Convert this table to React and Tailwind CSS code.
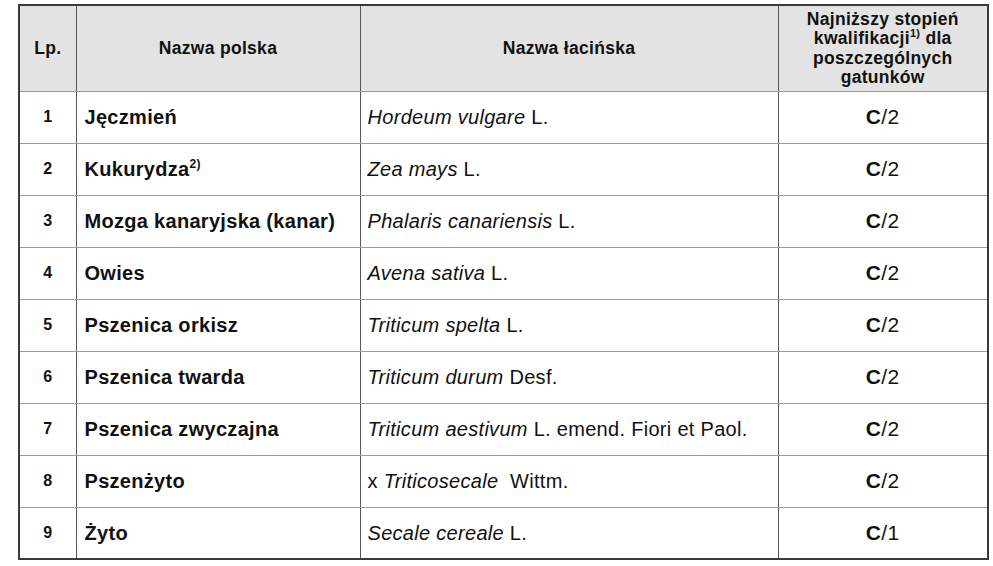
import React from "react";

const rows = [
  { lp: 1, pl: "Jęczmień", latin: "Hordeum vulgare", author: " L.", grade: "2" },
  { lp: 2, pl: "Kukurydza", sup: "2)", latin: "Zea mays", author: " L.", grade: "2" },
  { lp: 3, pl: "Mozga kanaryjska (kanar)", latin: "Phalaris canariensis", author: " L.", grade: "2" },
  { lp: 4, pl: "Owies", latin: "Avena sativa", author: " L.", grade: "2" },
  { lp: 5, pl: "Pszenica orkisz", latin: "Triticum spelta", author: " L.", grade: "2" },
  { lp: 6, pl: "Pszenica twarda", latin: "Triticum durum", author: " Desf.", grade: "2" },
  { lp: 7, pl: "Pszenica zwyczajna", latin: "Triticum aestivum", author: " L. emend. Fiori et Paol.", grade: "2" },
  { lp: 8, pl: "Pszenżyto", prefix: "x ", latin: "Triticosecale", author: "\u00a0 Wittm.", grade: "2" },
  { lp: 9, pl: "Żyto", latin: "Secale cereale", author: " L.", grade: "1" },
];

const cell = "border-y border-x border-y-[#9a9a9a] border-x-[#555555]";

export default function App() {
  return (
    <div className="bg-white w-[993px] h-[566px] pt-[4px] pl-[18px] font-['Liberation_Sans',Arial,sans-serif] text-[#111]">
      <table className="table-fixed border-collapse border-2 border-[#3a3a3a] w-[969px]">
        <colgroup>
          <col className="w-[57px]" />
          <col className="w-[284px]" />
          <col className="w-[418px]" />
          <col className="w-[210px]" />
        </colgroup>
        <thead>
          <tr className="h-[86px] bg-[#e3e3e3] font-bold text-[17.5px] tracking-[0.3px]">
            <th className={`${cell} text-center`}>Lp.</th>
            <th className={`${cell} text-center`}>Nazwa polska</th>
            <th className={`${cell} text-center`}>Nazwa łacińska</th>
            <th className={`${cell} text-center leading-[19.5px] pt-[1px]`}>
              Najniższy stopień
              <br />
              kwalifikacji<sup className="text-[11px] font-bold relative -top-[7px]">1)</sup> dla
              <br />
              poszczególnych
              <br />
              gatunków
            </th>
          </tr>
        </thead>
        <tbody>
          {rows.map((r) => (
            <tr key={r.lp} className="h-[52px]">
              <td className={`${cell} text-center font-bold text-[16px]`}>{r.lp}</td>
              <td className={`${cell} pl-[8px] font-bold text-[20px] tracking-[0.3px]`}>
                {r.pl}
                {r.sup && <sup className="text-[12px] font-bold relative -top-[8px]">{r.sup}</sup>}
              </td>
              <td className={`${cell} pl-[7px] text-[20px] tracking-[0.3px] whitespace-pre`}>
                {r.prefix}
                <i>{r.latin}</i>
                {r.author}
              </td>
              <td className={`${cell} text-center text-[21px] tracking-[0.4px]`}>
                <b>C</b>/{r.grade}
              </td>
            </tr>
          ))}
        </tbody>
      </table>
    </div>
  );
}
